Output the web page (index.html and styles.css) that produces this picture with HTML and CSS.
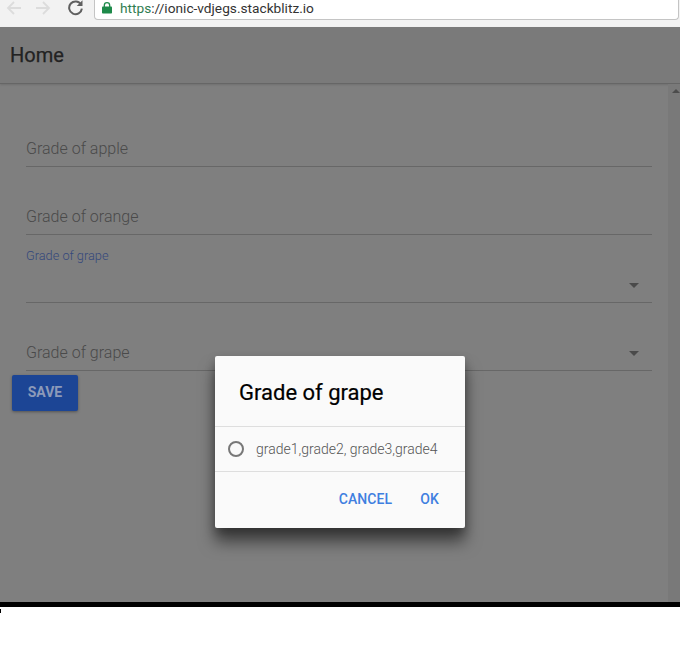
FILE: index.html
```html
<!DOCTYPE html>
<html lang="en">
<head>
<meta charset="utf-8">
<title>Home</title>
<link rel="stylesheet" href="styles.css">
</head>
<body>
<div class="browser">
  <svg class="nav-icon" viewBox="0 0 16 16"><path d="M15 8H2M8 2 2 8l6 6" fill="none" stroke="#dcdcdc" stroke-width="1.8"/></svg>
  <svg class="nav-icon" viewBox="0 0 16 16"><path d="M1 8h13M8 2l6 6-6 6" fill="none" stroke="#dcdcdc" stroke-width="1.8"/></svg>
  <svg class="nav-icon reload" viewBox="0 0 16 16"><path d="M13.2 5.2A6 6 0 1 0 14 9" fill="none" stroke="#5f5f5f" stroke-width="1.9"/><path d="M14.6 1.2v5.4H9.2z" fill="#5f5f5f"/></svg>
  <div class="url">
    <svg class="lock" viewBox="0 0 10 12"><path d="M2.3 5V3.4a2.7 2.7 0 0 1 5.4 0V5" fill="none" stroke="#1e8a4a" stroke-width="1.3"/><rect y="4.6" width="10" height="7" rx=".8" fill="#1e8a4a"/></svg>
    <span class="scheme">https</span><span class="rest">://ionic-vdjegs.stackblitz.io</span>
  </div>
</div>
<div class="app">
  <header class="toolbar">Home</header>
  <main class="content">
    <form class="form">
      <div class="field"><span class="placeholder">Grade of apple</span></div>
      <div class="field"><span class="placeholder">Grade of orange</span></div>
      <div class="field focused">
        <span class="label">Grade of grape</span>
        <span class="arrow"></span>
      </div>
      <div class="field"><span class="placeholder">Grade of grape</span><span class="arrow"></span></div>
      <div class="save">SAVE</div>
    </form>
    <div class="scrollbar"><span class="scroll-up"></span></div>
  </main>
  <div class="dialog">
    <h2 class="dialog-title">Grade of grape</h2>
    <div class="dialog-list">
      <span class="radio"></span>
      <span class="option">grade1,grade2, grade3,grade4</span>
    </div>
    <div class="dialog-actions">
      <span class="action">CANCEL</span>
      <span class="action">OK</span>
    </div>
  </div>
</div>
<div class="blackbar"></div>
<div class="tick"></div>
</body>
</html>
```
FILE: styles.css
```css
* { box-sizing: border-box; }
html, body { margin: 0; padding: 0; background: #fff; }
body { font-family: Roboto, "Liberation Sans", sans-serif; width: 680px; height: 648px; overflow: hidden; }

.browser { height: 27px; background: #f2f2f2; display: flex; align-items: flex-start; position: relative; overflow: hidden; }
.nav-icon { width: 16px; height: 16px; margin-top: 0; flex: none; }
.nav-icon:nth-child(1) { margin-left: 6px; }
.nav-icon:nth-child(2) { margin-left: 13px; }
.nav-icon.reload { margin-left: 16px; width: 17px; height: 17px; margin-top: -1px; }
.url { margin-left: 10px; flex: 1; height: 21px; margin-top: -1px; margin-right: 1px; background: #fff; border: 1px solid #c4c4c4; border-top: none; border-radius: 0 0 4px 4px; display: flex; align-items: center; padding-left: 7px; font-size: 13.7px; padding-bottom: 3px; }
.lock { width: 10px; height: 12px; margin-right: 8px; flex: none; }
.scheme { color: #2f7d50; }
.rest { color: #333; }

.app { position: relative; height: 575px; background: #7f7f7f; display: flex; flex-direction: column; }
.toolbar { height: 57px; flex: none; background: #7a7a7a; border-bottom: 1px solid #666; box-shadow: 0 1px 2px rgba(0,0,0,.12); font-size: 20px; font-weight: 400; -webkit-text-stroke: .25px #222; line-height: 56px; padding-left: 10px; color: #222; }
.content { flex: 1; display: flex; min-height: 0; }
.form { flex: 1; padding: 15px 16px 0 12px; }
.field { margin-left: 14px; height: 68px; border-bottom: 1px solid #676767; position: relative; display: flex; align-items: flex-end; padding-bottom: 7px; }
.placeholder { font-size: 16px; line-height: 20px; color: #4a4a4a; font-weight: 300; }
.focused { display: block; padding: 13px 0 0; }
.label { display: block; font-size: 12.75px; line-height: 16px; color: #34487c; font-weight: 300; }
.arrow { position: absolute; right: 13px; bottom: 14px; width: 0; height: 0; border-left: 5px solid transparent; border-right: 5px solid transparent; border-top: 5px solid #4a4a4a; }
.save { width: 66px; height: 36px; margin-top: 4px; background: #1c4595; border-radius: 2px; box-shadow: 0 1px 3px rgba(0,0,0,.35); color: #8c9ab9; font-size: 14px; font-weight: 700; line-height: 35px; text-align: center; }
.scrollbar { width: 12px; flex: none; background: #797979; padding: 5px 0 0 4px; }
.scroll-up { display: block; width: 0; height: 0; border-left: 4px solid transparent; border-right: 4px solid transparent; border-bottom: 4px solid #4c4c4c; }

.dialog { position: absolute; left: 215px; top: 329px; width: 250px; height: 172px; background: #fafafa; border-radius: 2px; box-shadow: 0 14px 16px rgba(0,0,0,.5), 0 4px 10px rgba(0,0,0,.25); display: flex; flex-direction: column; }
.dialog-title { margin: 0; height: 71px; padding: 24px 24px 0; font-size: 22px; line-height: 26px; font-weight: 400; -webkit-text-stroke: .2px #000; color: #000; border-bottom: 1px solid #dedede; }
.dialog-list { height: 45px; flex: none; display: flex; align-items: center; padding-left: 13px; border-bottom: 1px solid #dedede; }
.radio { width: 16px; height: 16px; border: 2px solid #787878; border-radius: 50%; flex: none; }
.option { margin-left: 12px; font-size: 14px; color: #555; font-weight: 300; }
.dialog-actions { flex: 1; display: flex; justify-content: flex-end; align-items: center; gap: 28px; padding: 0 26px 2px 0; font-size: 14px; font-weight: 500; color: #3f7fe0; }
.action { letter-spacing: .1px; }

.blackbar { height: 5px; background: #000; }
.tick { width: 1px; height: 4px; background: #000; margin-top: 2px; }
```
